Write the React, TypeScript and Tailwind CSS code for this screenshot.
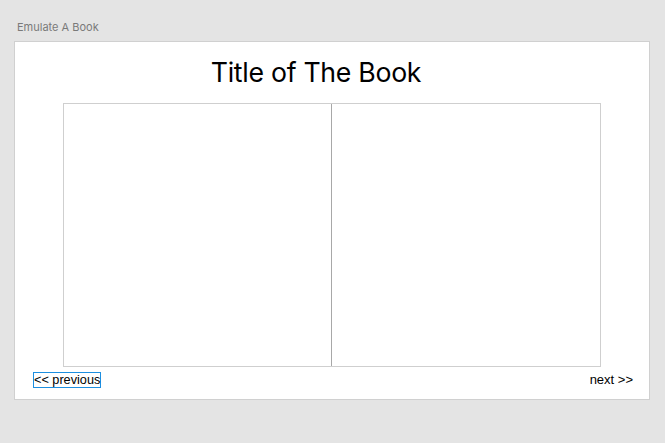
export default function App() {
  return (
    <div className="w-[665px] h-[443px] bg-[#e4e4e4] pt-[20px] pl-[14px]" style={{ fontFamily: "Inter, 'Liberation Sans', sans-serif" }}>
      <div className="pl-[3px] text-[11px] leading-[15px] text-[#7a7a7a] h-[21px]">Emulate A Book</div>
      <div className="w-[636px] h-[359px] bg-white border border-[#d0d0d0]">
        <div className="h-[61px] pt-[12px] pr-[32px] text-center text-[26.7px] leading-[36px] text-black tracking-[-0.3px]">
          Title of The Book
        </div>
        <div className="mx-[48px] h-[264px] border border-[#cfcfcf] flex">
          <div className="w-[267px]" />
          <div className="w-px bg-[#a8a8a8]" />
          <div className="flex-1" />
        </div>
        <div className="flex justify-between items-center pl-[18px] pr-[16px] mt-[5px]" style={{ fontFamily: "'Liberation Sans', Arial, sans-serif" }}>
          <button className="border border-[#1d8fe0] text-[12.7px] leading-[14px] text-black px-0 h-[16px]">&lt;&lt; previous</button>
          <span className="text-[13px] leading-[14px] text-black">next &gt;&gt;</span>
        </div>
      </div>
    </div>
  );
}
